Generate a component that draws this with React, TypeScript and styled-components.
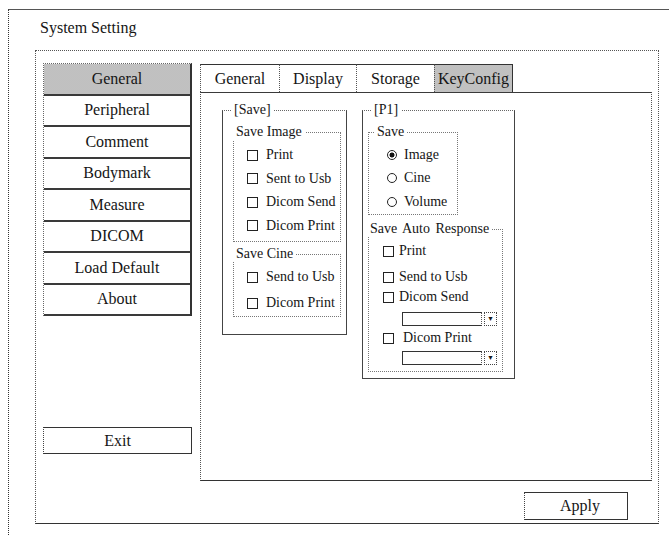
import styled, { createGlobalStyle, css } from 'styled-components';

const GlobalStyle = createGlobalStyle`
  html, body {
    margin: 0;
    padding: 0;
    background: #fff;
    overflow: hidden;
  }
  body {
    font-family: 'Liberation Serif', 'Times New Roman', serif;
    color: #151515;
  }
  * {
    box-sizing: border-box;
  }
`;

// scanned halftone shading used for the selected nav item / tab
const halftone = css`
  background-color: #e2e2e2;
  background-image: radial-gradient(circle, #9a9a9a 0.6px, transparent 0.8px);
  background-size: 2px 2px;
`;

const Frame = styled.div`
  margin: 9px 0 0 8px;
  width: 690px;
  height: 526px;
  border-top: 1px solid #555;
  border-left: 1px dotted #333;
  padding: 9px 0 0 26px;
`;

const Title = styled.h1`
  margin: 0 0 13px 5px;
  font-size: 16px;
  font-weight: normal;
  line-height: 18px;
`;

const Panel = styled.div`
  width: 624px;
  height: 474px;
  border: 1px dotted #555;
  border-bottom: 1px solid #333;
  padding: 12px 5px 2px 7px;
  display: grid;
  grid-template-columns: 149px 452px;
  grid-template-rows: 418px 28px;
  column-gap: 8px;
  row-gap: 11px;
`;

const Side = styled.div`
  display: flex;
  flex-direction: column;
`;

const NavList = styled.div`
  display: flex;
  flex-direction: column;
  border-top: 1px dotted #666;
  border-left: 1px dotted #666;
  border-right: 2px solid #333;
`;

const NavItem = styled.div<{ $active?: boolean }>`
  height: 31.5px;
  display: flex;
  align-items: center;
  justify-content: center;
  font-size: 16px;
  border-bottom: 2px solid #3a3a3a;
  ${(p) => p.$active && halftone}
`;

const PlainButton = styled.button`
  font-family: inherit;
  font-size: 16px;
  color: #151515;
  background: #fff;
  border: 1px solid #333;
  border-left: 1px dotted #444;
  padding: 0;
  display: flex;
  align-items: center;
  justify-content: center;
`;

const ExitButton = styled(PlainButton)`
  margin-top: auto;
  margin-bottom: 27px;
  width: 149px;
  height: 27px;
`;

const ApplyButton = styled(PlainButton)`
  grid-column: 2;
  justify-self: end;
  margin-right: 24px;
  width: 104px;
  height: 28px;
  padding-left: 8px;
`;

const TabArea = styled.div`
  display: flex;
  flex-direction: column;
  padding-top: 1px;
`;

const TabBar = styled.div`
  display: flex;
  height: 28px;
`;

const Tab = styled.div<{ $w: number; $active?: boolean; $last?: boolean }>`
  width: ${(p) => p.$w}px;
  display: flex;
  align-items: center;
  justify-content: center;
  font-size: 16px;
  border-top: 1px solid #333;
  border-left: 1px dotted #555;
  border-right: ${(p) => (p.$last ? '1px solid #333' : 'none')};
  ${(p) => p.$active && halftone}
`;

const TabBody = styled.div`
  flex: 1;
  border: 1px dotted #555;
  border-top: 1px solid #3a3a3a;
  border-bottom: 1px solid #333;
  padding: 9px 0 0 21px;
  display: flex;
  align-items: flex-start;
  gap: 15px;
`;

const Group = styled.fieldset<{ $w: number; $pl: number; $pb: number }>`
  margin: 0;
  min-width: 0;
  width: ${(p) => p.$w}px;
  padding: 6px 0 ${(p) => p.$pb}px ${(p) => p.$pl}px;
  border: 1px solid #444;
  border-top: 1px dotted #666;
`;

const Legend = styled.legend<{ $shift?: number }>`
  font-size: 14px;
  line-height: 16px;
  padding: 0 3px;
  margin-left: ${(p) => p.$shift ?? 0}px;
`;

const WideLegend = styled(Legend)`
  word-spacing: 2px;
`;

const SubGroup = styled.fieldset<{ $w: number; $mt?: number; $pt: number; $pb: number }>`
  margin: ${(p) => p.$mt ?? 0}px 0 0 0;
  min-width: 0;
  width: ${(p) => p.$w}px;
  padding: ${(p) => p.$pt}px 0 ${(p) => p.$pb}px 0;
  border: 1px dotted #777;
`;

const Option = styled.label<{ $h: number; $indent: number; $mt?: number; $gap?: number }>`
  display: flex;
  align-items: center;
  height: ${(p) => p.$h}px;
  margin-top: ${(p) => p.$mt ?? 0}px;
  padding-left: ${(p) => p.$indent}px;
  gap: ${(p) => p.$gap ?? 8}px;
  font-size: 14px;
  white-space: nowrap;
`;

const Check = styled.span`
  flex: none;
  width: 11px;
  height: 11px;
  border: 1px solid #222;
  background: #fff;
`;

const Radio = styled.span<{ $on?: boolean }>`
  flex: none;
  width: 10px;
  height: 10px;
  border-radius: 50%;
  border: 1px solid #222;
  background: ${(p) =>
    p.$on ? 'radial-gradient(circle, #111 0 2.2px, #fff 2.8px)' : '#fff'};
`;

const Select = styled.div<{ $mt: number }>`
  display: flex;
  gap: 2px;
  height: 14px;
  margin: ${(p) => p.$mt}px 0 0 33px;
`;

const SelectField = styled.span`
  width: 80px;
  border: 1px solid #333;
  border-right: 1px dotted #555;
`;

const SelectArrow = styled.span`
  width: 13px;
  border: 1px dotted #444;
  display: flex;
  align-items: center;
  justify-content: center;
  font-size: 7px;
  line-height: 1;
`;

const navItems = ['General', 'Peripheral', 'Comment', 'Bodymark', 'Measure', 'DICOM', 'Load Default', 'About'];

const tabs = [
  { label: 'General', w: 79 },
  { label: 'Display', w: 77 },
  { label: 'Storage', w: 78 },
  { label: 'KeyConfig', w: 79 },
];

const App = () => (
  <>
    <GlobalStyle />
    <Frame>
      <Title>System Setting</Title>
      <Panel>
        <Side>
          <NavList>
            {navItems.map((item, i) => (
              <NavItem key={item} $active={i === 0}>
                {item}
              </NavItem>
            ))}
          </NavList>
          <ExitButton>Exit</ExitButton>
        </Side>

        <TabArea>
          <TabBar>
            {tabs.map((t, i) => (
              <Tab key={t.label} $w={t.w} $active={i === 3} $last={i === 3}>
                {t.label}
              </Tab>
            ))}
          </TabBar>
          <TabBody>
            <Group $w={125} $pl={10} $pb={17}>
              <Legend $shift={-2}>[Save]</Legend>
              <SubGroup $w={108} $pt={3.5} $pb={3.5}>
                <Legend $shift={-1}>Save Image</Legend>
                {['Print', 'Sent to Usb', 'Dicom Send', 'Dicom Print'].map((o) => (
                  <Option key={o} $h={23.5} $indent={13}>
                    <Check />
                    {o}
                  </Option>
                ))}
              </SubGroup>
              <SubGroup $w={108} $mt={4} $pt={2} $pb={0}>
                <Legend $shift={-1}>Save Cine</Legend>
                {['Send to Usb', 'Dicom Print'].map((o) => (
                  <Option key={o} $h={26} $indent={13}>
                    <Check />
                    {o}
                  </Option>
                ))}
              </SubGroup>
            </Group>

            <Group $w={153} $pl={5} $pb={6}>
              <Legend $shift={3}>[P1]</Legend>
              <SubGroup $w={90} $pt={3} $pb={0}>
                <Legend $shift={5}>Save</Legend>
                {['Image', 'Cine', 'Volume'].map((o, i) => (
                  <Option key={o} $h={23.5} $indent={18} $gap={7}>
                    <Radio $on={i === 0} />
                    {o}
                  </Option>
                ))}
              </SubGroup>
              <SubGroup $w={135} $mt={6.5} $pt={4} $pb={6}>
                <WideLegend $shift={-2}>Save Auto Response</WideLegend>
                <Option $h={20} $indent={14} $gap={5}>
                  <Check />
                  Print
                </Option>
                <Option $h={20} $indent={14} $mt={6} $gap={5}>
                  <Check />
                  Send to Usb
                </Option>
                <Option $h={20} $indent={14} $gap={5}>
                  <Check />
                  Dicom Send
                </Option>
                <Select $mt={5}>
                  <SelectField />
                  <SelectArrow>▼</SelectArrow>
                </Select>
                <Option $h={20} $indent={14} $mt={2} $gap={9}>
                  <Check />
                  Dicom Print
                </Option>
                <Select $mt={3}>
                  <SelectField />
                  <SelectArrow>▼</SelectArrow>
                </Select>
              </SubGroup>
            </Group>
          </TabBody>
        </TabArea>

        <ApplyButton>Apply</ApplyButton>
      </Panel>
    </Frame>
  </>
);

export default App;
